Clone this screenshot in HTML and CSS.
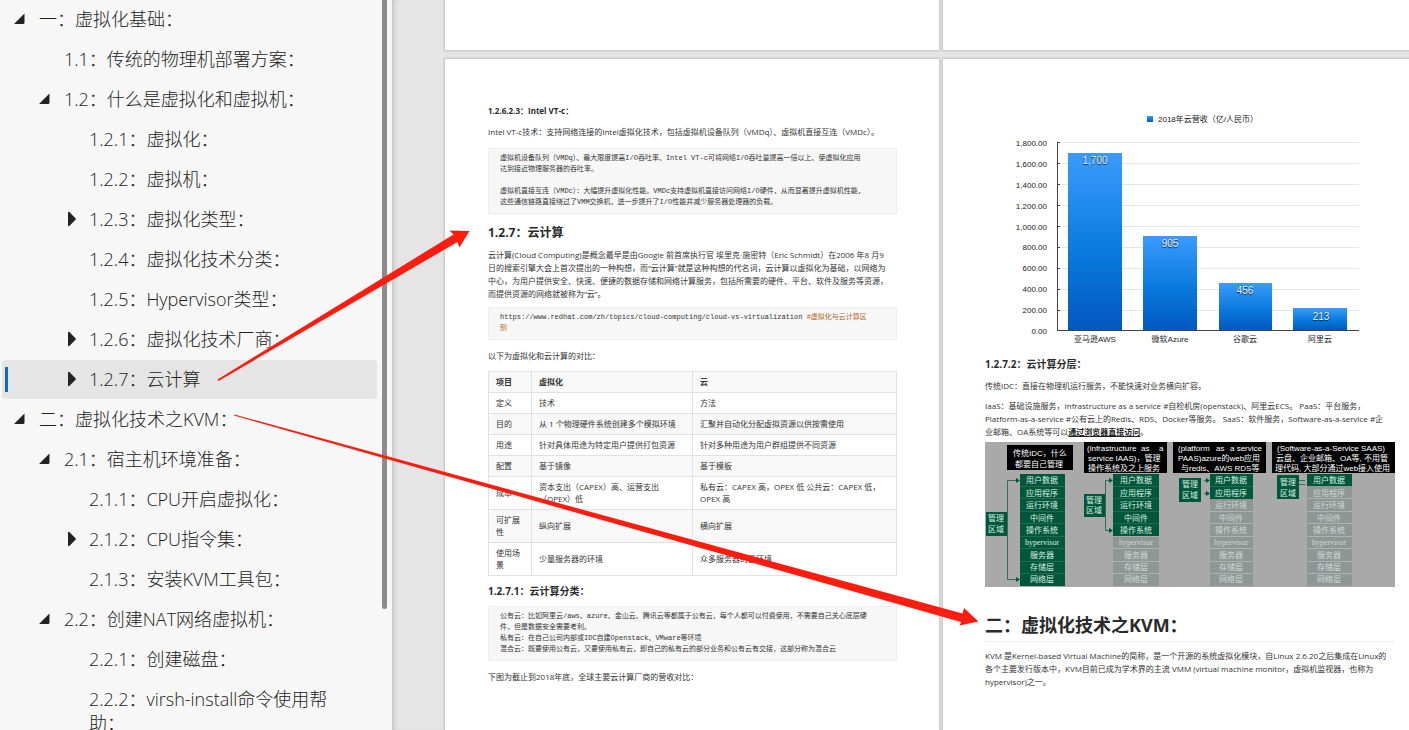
FILE: index.html
```html
<!DOCTYPE html>
<html lang="zh-CN">
<head>
<meta charset="utf-8">
<title>虚拟化与云计算</title>
<link rel="stylesheet" href="styles.css">
</head>
<body>
<div class="app">
  <nav class="sidebar" aria-label="目录">
    <ul class="tree" id="tree">
      <li class="row lv0"><button class="toggle" aria-label="折叠"><svg class="tri" viewBox="0 0 12 12"><path d="M0.500 10.500 10.500 0.500V9.500Q10.500 11 9 11H1Q0 11 .5 10.500Z"/></svg></button><a href="#c1">一：虚拟化基础：</a></li>
      <li class="row lv1"><span class="toggle"></span><a href="#c11">1.1：传统的物理机部署方案：</a></li>
      <li class="row lv1"><button class="toggle" aria-label="折叠"><svg class="tri" viewBox="0 0 12 12"><path d="M0.500 10.500 10.500 0.500V9.500Q10.500 11 9 11H1Q0 11 .5 10.500Z"/></svg></button><a href="#c12">1.2：什么是虚拟化和虚拟机：</a></li>
      <li class="row lv2"><span class="toggle"></span><a href="#c121">1.2.1：虚拟化：</a></li>
      <li class="row lv2"><span class="toggle"></span><a href="#c122">1.2.2：虚拟机：</a></li>
      <li class="row lv2"><button class="toggle" aria-label="展开"><svg class="tri closed" viewBox="0 0 10 16"><path d="M1 2Q1 0 2.500 1.200L8.500 7.200Q9.300 8 8.500 8.800L2.500 14.800Q1 16 1 14Z"/></svg></button><a href="#c123">1.2.3：虚拟化类型：</a></li>
      <li class="row lv2"><span class="toggle"></span><a href="#c124">1.2.4：虚拟化技术分类：</a></li>
      <li class="row lv2"><span class="toggle"></span><a href="#c125">1.2.5：Hypervisor类型：</a></li>
      <li class="row lv2"><button class="toggle" aria-label="展开"><svg class="tri closed" viewBox="0 0 10 16"><path d="M1 2Q1 0 2.500 1.200L8.500 7.200Q9.300 8 8.500 8.800L2.500 14.800Q1 16 1 14Z"/></svg></button><a href="#c126">1.2.6：虚拟化技术厂商：</a></li>
      <li class="row lv2 active"><button class="toggle" aria-label="展开"><svg class="tri closed" viewBox="0 0 10 16"><path d="M1 2Q1 0 2.500 1.200L8.500 7.200Q9.300 8 8.500 8.800L2.500 14.800Q1 16 1 14Z"/></svg></button><a href="#c127" aria-current="true">1.2.7：云计算</a></li>
      <li class="row lv0"><button class="toggle" aria-label="折叠"><svg class="tri" viewBox="0 0 12 12"><path d="M0.500 10.500 10.500 0.500V9.500Q10.500 11 9 11H1Q0 11 .5 10.500Z"/></svg></button><a href="#c2">二：虚拟化技术之KVM：</a></li>
      <li class="row lv1"><button class="toggle" aria-label="折叠"><svg class="tri" viewBox="0 0 12 12"><path d="M0.500 10.500 10.500 0.500V9.500Q10.500 11 9 11H1Q0 11 .5 10.500Z"/></svg></button><a href="#c21">2.1：宿主机环境准备：</a></li>
      <li class="row lv2"><span class="toggle"></span><a href="#c211">2.1.1：CPU开启虚拟化：</a></li>
      <li class="row lv2"><button class="toggle" aria-label="展开"><svg class="tri closed" viewBox="0 0 10 16"><path d="M1 2Q1 0 2.500 1.200L8.500 7.200Q9.300 8 8.500 8.800L2.500 14.800Q1 16 1 14Z"/></svg></button><a href="#c212">2.1.2：CPU指令集：</a></li>
      <li class="row lv2"><span class="toggle"></span><a href="#c213">2.1.3：安装KVM工具包：</a></li>
      <li class="row lv1"><button class="toggle" aria-label="折叠"><svg class="tri" viewBox="0 0 12 12"><path d="M0.500 10.500 10.500 0.500V9.500Q10.500 11 9 11H1Q0 11 .5 10.500Z"/></svg></button><a href="#c22">2.2：创建NAT网络虚拟机：</a></li>
      <li class="row lv2"><span class="toggle"></span><a href="#c221">2.2.1：创建磁盘：</a></li>
      <li class="row lv2"><span class="toggle"></span><a href="#c222">2.2.2：virsh-install命令使用帮助：</a></li>
    </ul>
    <div class="scrollbar"><div class="thumb"></div></div>
  </nav>

  <main class="viewer">
    <div class="pages">
      <div class="page prev"></div>
      <div class="page prev"></div>

      <article class="page sheet">
        <h6>1.2.6.2.3：Intel VT-c：</h6>
        <p class="intro">Intel VT-c技术：支持网络连接的Intel虚拟化技术，包括虚拟机设备队列（VMDq）、虚拟机直接互连（VMDc）。</p>
        <pre>虚拟机设备队列（VMDq）、最大限度提高I/O吞吐率、Intel VT-c可将网络I/O吞吐量提高一倍以上、使虚拟化应用
达到接近物理服务器的吞吐率。

虚拟机直接互连（VMDc）：大幅提升虚拟化性能。VMDc支持虚拟机直接访问网络I/O硬件，从而显著提升虚拟机性能，
这些通信链路直接绕过了VMM交换机，进一步提升了I/O性能并减少服务器处理器的负载。</pre>
        <h4>1.2.7：云计算</h4>
        <p>云计算(Cloud Computing)是概念最早是由Google 前首席执行官 埃里克·施密特（Eric Schmidt）在2006 年8 月9<br>日的搜索引擎大会上首次提出的一种构想，而“云计算”就是这种构想的代名词，云计算以虚拟化为基础，以网络为<br>中心，为用户提供安全、快速、便捷的数据存储和网络计算服务，包括所需要的硬件、平台、软件及服务等资源，<br>而提供资源的网络就被称为“云”。</p>
        <pre>https://www.redhat.com/zh/topics/cloud-computing/cloud-vs-virtualization <span class="comment">#虚拟化与云计算区</span>
<span class="comment">别</span></pre>
        <p class="lead">以下为虚拟化和云计算的对比：</p>
        <table class="compare">
          <colgroup><col class="c1"><col class="c2"><col class="c3"></colgroup>
          <thead><tr><th>项目</th><th>虚拟化</th><th>云</th></tr></thead>
          <tbody>
            <tr><td>定义</td><td>技术</td><td>方法</td></tr>
            <tr><td>目的</td><td>从 1 个物理硬件系统创建多个模拟环境</td><td>汇聚并自动化分配虚拟资源以供按需使用</td></tr>
            <tr><td>用途</td><td>针对具体用途为特定用户提供打包资源</td><td>针对多种用途为用户群组提供不同资源</td></tr>
            <tr><td>配置</td><td>基于镜像</td><td>基于模板</td></tr>
            <tr><td>成本</td><td>资本支出（CAPEX）高、运营支出<br>（OPEX）低</td><td>私有云：CAPEX 高，OPEX 低 公共云：CAPEX 低，<br>OPEX 高</td></tr>
            <tr><td>可扩展<br>性</td><td>纵向扩展</td><td>横向扩展</td></tr>
            <tr><td>使用场<br>景</td><td>少量服务器的环境</td><td>众多服务器的云环境</td></tr>
          </tbody>
        </table>
        <h5>1.2.7.1：云计算分类：</h5>
        <pre>公有云：比如阿里云/aws、azure、金山云、腾讯云等都属于公有云，每个人都可以付费使用，不需要自己关心底层硬
件，但是数据安全需要考利。
私有云：在自己公司内部或IDC自建Openstack、VMware等环境
混合云：既要使用公有云，又要使用私有云，即自己的私有云的部分业务和公有云有交接，这部分称为混合云</pre>
        <p class="lead">下图为截止到2018年底，全球主要云计算厂商的营收对比：</p>
      </article>

      <article class="page sheet">
        <svg class="figure" viewBox="985 104 410 246" role="img" aria-label="2018年云营收">
          <defs>
            <linearGradient id="bar" x1="0" y1="0" x2="0" y2="1"><stop offset="0" stop-color="#3b9bfd"/><stop offset=".55" stop-color="#0a7ade"/><stop offset="1" stop-color="#0258bf"/></linearGradient>
          </defs>
          <rect x="1147" y="116" width="6" height="6" fill="url(#bar)"/>
          <text class="cat" x="1158" y="122">2018年云营收（亿/人民币）</text>
          <path class="grid" d="M1061 142.500H1359M1061 163.500H1359M1061 184.500H1359M1061 205.500H1359M1061 226.500H1359M1061 247.500H1359M1061 268.500H1359M1061 289.500H1359M1061 310.500H1359"/>
          <g class="tick">
            <text x="1047" y="146">1,800.00</text><text x="1047" y="167">1,600.00</text><text x="1047" y="188">1,400.00</text><text x="1047" y="209">1,200.00</text><text x="1047" y="230">1,000.00</text><text x="1047" y="250">800.00</text><text x="1047" y="271">600.00</text><text x="1047" y="292">400.00</text><text x="1047" y="313">200.00</text><text x="1047" y="334">0.00</text>
          </g>
          <g fill="url(#bar)"><rect x="1068" y="153" width="54" height="177"/><rect x="1143" y="236" width="54" height="94"/><rect x="1219" y="283" width="53" height="47"/><rect x="1293" y="308" width="54" height="22"/></g>
          <path class="axis" d="M1057.500 142V331M1057.500 142.500H1060M1057.500 163.500H1060M1057.500 184.500H1060M1057.500 205.500H1060M1057.500 226.500H1060M1057.500 247.500H1060M1057.500 268.500H1060M1057.500 289.500H1060M1057.500 310.500H1060M1057 330.500H1359"/>
          <g class="val"><text x="1095" y="164">1,700</text><text x="1170" y="247">905</text><text x="1245" y="294">456</text><text x="1321" y="320">213</text></g>
          <g class="cat mid"><text x="1095" y="342">亚马逊AWS</text><text x="1170" y="342">微软Azure</text><text x="1245" y="342">谷歌云</text><text x="1320" y="342">阿里云</text></g>
        </svg>
        <h5>1.2.7.2：云计算分层：</h5>
        <p>传统IDC：直接在物理机运行服务，不能快速对业务横向扩容。</p>
        <p class="tight">IaaS：基础设施服务，Infrastructure as a service #自检机房(openstack)、阿里云ECS。 PaaS：平台服务，<br>Platform-as-a-service #公有云上的Redis、RDS、Docker等服务。 SaaS：软件服务，Software-as-a-service #企<br>业邮箱、OA系统等可以<strong class="mark">通过浏览器直接访问</strong>。</p>
        <svg class="figure layers" viewBox="985 442 410 145" role="img" aria-label="云计算分层">
          <rect x="985" y="442" width="410" height="145" fill="#a9a9a9"/>
          <g fill="#000"><rect x="1007" y="445" width="66" height="25"/><rect x="1084" y="442" width="83" height="31"/><rect x="1173" y="442" width="93" height="31"/><rect x="1272" y="442" width="123" height="31"/></g>
          <g class="cap">
            <text x="1013" y="456">传统IDC，什么</text><text x="1015" y="467">都要自己管理</text>
            <text x="1087" y="451">(infrastructure<tspan x="1141">as</tspan><tspan x="1159">a</tspan></text><text x="1088" y="461">service IAAS)，管理</text><text x="1088" y="471">操作系统及之上服务</text>
            <text x="1178" y="451">(platform<tspan x="1216">as</tspan><tspan x="1230">a service</tspan></text><text x="1178" y="461">PAAS)azure的web应用</text><text x="1181" y="471">与redis、AWS RDS等</text>
            <text x="1277" y="451">(Software-as-a-Service SAAS)</text><text x="1276" y="461">云盘、企业邮箱、OA等, 不用管</text><text x="1275" y="471">理代码, 大部分通过web接入使用</text>
          </g>
          <g fill="#8f9795"><rect x="1113" y="537" width="46" height="49"/><rect x="1210" y="499" width="43" height="87"/><rect x="1307" y="486" width="45" height="100"/></g>
          <g fill="#02573a"><rect x="1020" y="474" width="45" height="112"/><rect x="1113" y="474" width="46" height="62"/><rect x="1210" y="474" width="43" height="25"/><rect x="1307" y="474" width="45" height="12"/><rect x="986" y="512" width="21" height="24"/><rect x="1084" y="494" width="21" height="23"/><rect x="1179" y="478" width="22" height="24"/><rect x="1277" y="475" width="22" height="24"/></g>
          <path class="cell-g" d="M1020 486.500h45m-45 12h45m-45 13h45m-45 12h45m-45 13h45m-45 12h45m-45 13h45m-45 12h45M1113 486.500h46m-46 12h46m-46 13h46m-46 12h46M1210 486.500h43"/>
          <path class="cell-w" d="M1113 548.500h46m-46 13h46m-46 12h46M1210 511.500h43m-43 12h43m-43 13h43m-43 12h43m-43 13h43m-43 12h43M1307 498.500h45m-45 13h45m-45 12h45m-45 13h45m-45 12h45m-45 13h45m-45 12h45"/>
          <path class="link" d="M1017 480.500H1007.500V579.500H1017M1111 480.500H1105.500V530.500H1111M1204 480.500H1208M1204 493.500H1208M1299 480.500H1305M1299 484.500H1305"/>
          <path fill="#02573a" d="M1016 478l4 2.500-4 2.500zM1016 577l4 2.500-4 2.500zM1109 478l4 2.500-4 2.500zM1109 528l4 2.500-4 2.500zM1206 478l4 2.500-4 2.500zM1206 491l4 2.500-4 2.500z"/>
          <g class="lab">
            <text x="1042" y="483">用户数据</text><text x="1042" y="496">应用程序</text><text x="1042" y="508">运行环境</text><text x="1042" y="521">中间件</text><text x="1042" y="533">操作系统</text><text x="1042" y="545" class="hv">hypervisor</text><text x="1042" y="558">服务器</text><text x="1042" y="570">存储层</text><text x="1042" y="582">网络层</text>
            <text x="1136" y="483">用户数据</text><text x="1136" y="496">应用程序</text><text x="1136" y="508">运行环境</text><text x="1136" y="521">中间件</text><text x="1136" y="533">操作系统</text>
            <text x="1231" y="483">用户数据</text><text x="1231" y="496">应用程序</text><text x="1329" y="483">用户数据</text>
            <text x="996" y="521">管理</text><text x="996" y="532">区域</text><text x="1094" y="503">管理</text><text x="1094" y="513">区域</text><text x="1190" y="487">管理</text><text x="1190" y="498">区域</text><text x="1288" y="485">管理</text><text x="1288" y="496">区域</text>
          </g>
          <g class="lab dim">
            <text x="1136" y="545" class="hv">hypervisor</text><text x="1136" y="558">服务器</text><text x="1136" y="570">存储层</text><text x="1136" y="582">网络层</text>
            <text x="1231" y="508">运行环境</text><text x="1231" y="521">中间件</text><text x="1231" y="533">操作系统</text><text x="1231" y="545" class="hv">hypervisor</text><text x="1231" y="558">服务器</text><text x="1231" y="570">存储层</text><text x="1231" y="582">网络层</text>
            <text x="1329" y="496">应用程序</text><text x="1329" y="508">运行环境</text><text x="1329" y="521">中间件</text><text x="1329" y="533">操作系统</text><text x="1329" y="545" class="hv">hypervisor</text><text x="1329" y="558">服务器</text><text x="1329" y="570">存储层</text><text x="1329" y="582">网络层</text>
          </g>
        </svg>
        <h2>二：虚拟化技术之KVM：</h2>
        <p>KVM 是Kernel-based Virtual Machine的简称，是一个开源的系统虚拟化模块，自Linux 2.6.20之后集成在Linux的<br>各个主要发行版本中，KVM目前已成为学术界的主流 VMM (virtual machine monitor，虚拟机监视器，也称为<br>hypervisor)之一。</p>
      </article>
    </div>
  </main>

  <svg class="arrows" width="1409" height="730" viewBox="0 0 1409 730" aria-hidden="true">
    <path d="M218.500 381 217.500 379.500 453.500 234.500 449.500 230.500 469.500 231 459.500 247.500 457.500 242Z"/>
    <path d="M234 415.500 234.500 414.500 962.500 613.500 964 608 978.500 621.500 959.500 625.500 961 622Z"/>
  </svg>
</div>
</body>
</html>
```

FILE: styles.css
```css
* { box-sizing: border-box; }
body {
  margin: 0;
  font-family: "Open Sans", "Noto Sans CJK SC", sans-serif;
  color: #333;
  background: #e5e5e5;
}
.app {
  position: relative;
  display: flex;
  height: 100vh;
  overflow: hidden;
}

/* outline panel */
.sidebar {
  flex: 0 0 393px;
  display: flex;
  justify-content: space-between;
  overflow: hidden;
  background: #f7f7f7;
  border-right: 1px solid #c8c8c8;
}
.tree {
  flex: 1;
  display: flex;
  flex-direction: column;
  gap: 1px;
  margin: 0;
  padding: 0 5px 0 2px;
  list-style: none;
}
.row {
  flex: none;
  display: flex;
  padding: 7px 30px 8px 12px;
  font-size: 18px;
  line-height: 24px;
  font-weight: 300;
  color: #222;
}
.lv1 { padding-left: 37px; }
.lv2 { padding-left: 62px; }
.row a {
  color: inherit;
  text-decoration: none;
}
.toggle {
  flex: 0 0 25px;
  height: 24px;
  display: flex;
  align-items: center;
  padding: 0;
  border: 0;
  background: none;
}
.tri {
  width: 12px;
  height: 12px;
  fill: #222;
}
.closed {
  width: 10px;
  height: 16px;
  margin-left: 3px;
}
.active {
  background: linear-gradient(#0f6cbd, #0f6cbd) 3px 7px / 3px 25px no-repeat #e5e5e5;
  border-radius: 3px;
}
.scrollbar { flex: 0 0 10px; }
.thumb {
  width: 5px;
  height: calc(100vh - 121px);
  border-radius: 0 0 3px 3px;
  background: #8c8c8c;
}

/* document pages */
.viewer {
  flex: 1;
  min-width: 0;
  overflow: hidden;
  padding-left: 52px;
  background: #e5e5e5;
  box-shadow: inset 4px 0 4px -2px #ccc;
}
.pages {
  display: grid;
  grid-template-columns: 494px 494px;
  gap: 9px 4px;
}
.page {
  background: #fff;
  box-shadow: 0 0 2px 1px #c2c2c2;
}
.prev { height: 50px; }
.sheet {
  min-height: 700px;
  padding: 45px 42px 0 43px;
  font-size: 8px;
  line-height: 13px;
  white-space: nowrap;
}
.sheet + .sheet { padding: 45px 42px; }
p { margin: 7px 0; }
.intro { margin: 8px 0 10px; }
.tight { margin-bottom: 4px; }
h2, h4, h5, h6 { margin: 0; color: #2a2a2a; }
h6 { font-size: 8px; line-height: 13px; }
h5 { font-size: 10px; line-height: 15px; margin-top: 8px; }
.figure + h5 { margin-top: 7px; }
h4 { font-size: 12px; line-height: 17px; margin-top: 10px; }
h2 {
  font-size: 18px;
  line-height: 24px;
  margin-top: 26px;
  padding-bottom: 4px;
  border-bottom: 1px solid #eee;
}
pre {
  margin: 7px 0 9px;
  padding: 4px 11px 5px;
  border: 1px solid #eee;
  background: #f7f7f7;
  font: 7px/11px "Liberation Mono", "Noto Sans CJK SC", monospace;
}
.comment { color: #b4631f; }
.lead { margin: 9px 0; }
.compare {
  width: 100%;
  table-layout: fixed;
  border-collapse: collapse;
  font-size: 8px;
  line-height: 12px;
}
.c1 { width: 43px; }
.c2 { width: 161px; }
.compare th, .compare td {
  padding: 4px 7px;
  border: 1px solid #dfe2e5;
  text-align: left;
}
.compare th, .compare tr:nth-child(even) { background: #f8f8f8; }
.mark { text-decoration: underline; color: #222; }

/* figures */
.figure {
  display: block;
  width: 100%;
  font-family: "Liberation Sans", "Noto Sans CJK SC", sans-serif;
  font-size: 8px;
}
.grid { stroke: #e6e6e6; fill: none; }
.axis { stroke: #444; fill: none; }
.tick { text-anchor: end; fill: #222; }
.cat { fill: #222; }
.mid { text-anchor: middle; }
.val {
  font-size: 10px;
  fill: #e4f0fb;
  text-anchor: middle;
  text-shadow: 0 1px 1px #123;
}
.cap { fill: #fff; }
.lab { fill: #d8efe4; text-anchor: middle; }
.dim { fill: #d2d6d5; }
.hv { font-family: "Liberation Serif", serif; }
.cell-g { stroke: #1d6e50; fill: none; }
.cell-w { stroke: #a9b5b1; fill: none; }
.link { stroke: #2a7257; fill: none; }

/* annotation arrows over the page */
.arrows {
  position: absolute;
  left: 0;
  top: 0;
  pointer-events: none;
  fill: #fd1d10;
}
```
